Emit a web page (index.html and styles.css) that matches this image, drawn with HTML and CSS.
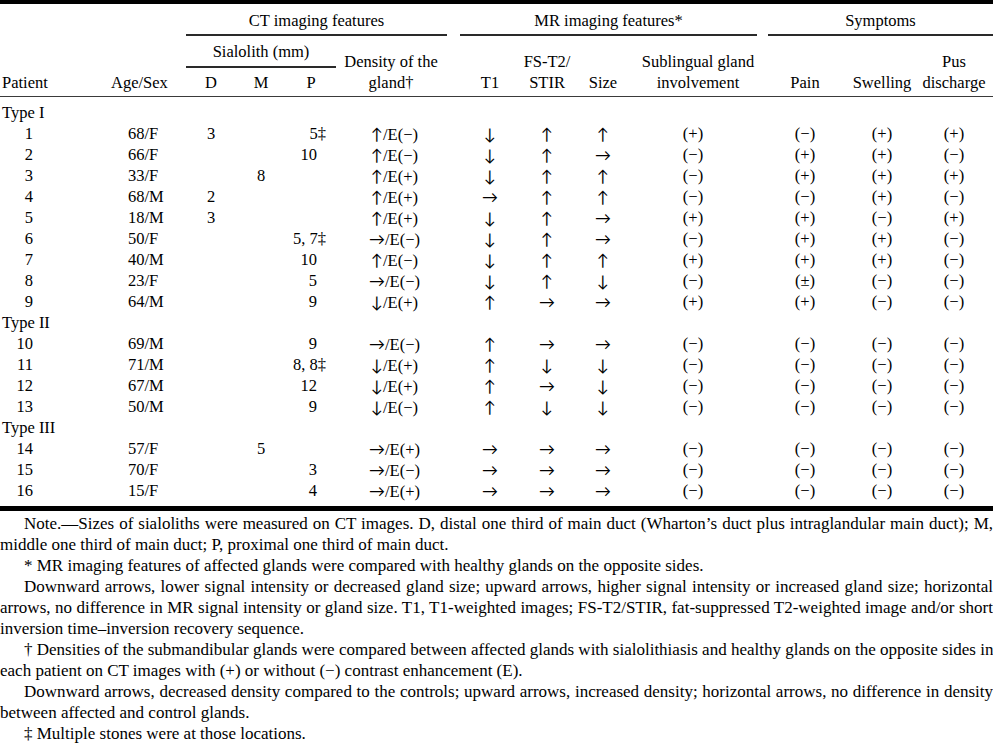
FILE: index.html
```html
<!DOCTYPE html>
<html lang="en">
<head>
<meta charset="utf-8">
<title>Table</title>
<link rel="stylesheet" href="styles.css">
</head>
<body>
<div class="tbl">
  <div class="head">
    <div class="grp g-ct">CT imaging features</div>
    <div class="grp g-mr">MR imaging features*</div>
    <div class="grp g-sy">Symptoms</div>
    <div class="sub-grp">Sialolith (mm)</div>
    <div class="h c1">Patient</div>
    <div class="h c2">Age/Sex</div>
    <div class="h c3">D</div>
    <div class="h c4">M</div>
    <div class="h c5">P</div>
    <div class="h2 c6">Density of the<br>gland†</div>
    <div class="h c7">T1</div>
    <div class="h2 c8">FS-T2/<br>STIR</div>
    <div class="h c9">Size</div>
    <div class="h2 c10">Sublingual gland<br>involvement</div>
    <div class="h c11">Pain</div>
    <div class="h c12">Swelling</div>
    <div class="h2 c13">Pus<br>discharge</div>
  </div>
  <div class="body">
    <div class="row"><div class="type">Type I</div></div>
    <div class="row"><div class="pt">1</div><div class="age">68/F</div><div>3</div><div></div><div class="p">5<span class="dag">‡</span></div><div><span class="ar">↑</span>/E(−)</div><div class="ar">↓</div><div class="ar">↑</div><div class="ar">↑</div><div class="sub">(+)</div><div>(−)</div><div>(+)</div><div>(+)</div></div>
    <div class="row"><div class="pt">2</div><div class="age">66/F</div><div></div><div></div><div class="p">10</div><div><span class="ar">↑</span>/E(−)</div><div class="ar">↓</div><div class="ar">↑</div><div class="ar">→</div><div class="sub">(−)</div><div>(+)</div><div>(+)</div><div>(−)</div></div>
    <div class="row"><div class="pt">3</div><div class="age">33/F</div><div></div><div>8</div><div class="p"></div><div><span class="ar">↑</span>/E(+)</div><div class="ar">↓</div><div class="ar">↑</div><div class="ar">↑</div><div class="sub">(−)</div><div>(+)</div><div>(+)</div><div>(+)</div></div>
    <div class="row"><div class="pt">4</div><div class="age">68/M</div><div>2</div><div></div><div class="p"></div><div><span class="ar">↑</span>/E(+)</div><div class="ar">→</div><div class="ar">↑</div><div class="ar">↑</div><div class="sub">(−)</div><div>(−)</div><div>(+)</div><div>(−)</div></div>
    <div class="row"><div class="pt">5</div><div class="age">18/M</div><div>3</div><div></div><div class="p"></div><div><span class="ar">↑</span>/E(+)</div><div class="ar">↓</div><div class="ar">↑</div><div class="ar">→</div><div class="sub">(+)</div><div>(+)</div><div>(−)</div><div>(+)</div></div>
    <div class="row"><div class="pt">6</div><div class="age">50/F</div><div></div><div></div><div class="p">5, 7<span class="dag">‡</span></div><div><span class="ar">→</span>/E(−)</div><div class="ar">↓</div><div class="ar">↑</div><div class="ar">→</div><div class="sub">(−)</div><div>(+)</div><div>(+)</div><div>(−)</div></div>
    <div class="row"><div class="pt">7</div><div class="age">40/M</div><div></div><div></div><div class="p">10</div><div><span class="ar">↑</span>/E(−)</div><div class="ar">↓</div><div class="ar">↑</div><div class="ar">↑</div><div class="sub">(+)</div><div>(+)</div><div>(+)</div><div>(−)</div></div>
    <div class="row"><div class="pt">8</div><div class="age">23/F</div><div></div><div></div><div class="p">5</div><div><span class="ar">→</span>/E(−)</div><div class="ar">↓</div><div class="ar">↑</div><div class="ar">↓</div><div class="sub">(−)</div><div>(±)</div><div>(−)</div><div>(−)</div></div>
    <div class="row"><div class="pt">9</div><div class="age">64/M</div><div></div><div></div><div class="p">9</div><div><span class="ar">↓</span>/E(+)</div><div class="ar">↑</div><div class="ar">→</div><div class="ar">→</div><div class="sub">(+)</div><div>(+)</div><div>(−)</div><div>(−)</div></div>
    <div class="row"><div class="type">Type II</div></div>
    <div class="row"><div class="pt">10</div><div class="age">69/M</div><div></div><div></div><div class="p">9</div><div><span class="ar">→</span>/E(−)</div><div class="ar">↑</div><div class="ar">→</div><div class="ar">→</div><div class="sub">(−)</div><div>(−)</div><div>(−)</div><div>(−)</div></div>
    <div class="row"><div class="pt">11</div><div class="age">71/M</div><div></div><div></div><div class="p">8, 8<span class="dag">‡</span></div><div><span class="ar">↓</span>/E(+)</div><div class="ar">↑</div><div class="ar">↓</div><div class="ar">↓</div><div class="sub">(−)</div><div>(−)</div><div>(−)</div><div>(−)</div></div>
    <div class="row"><div class="pt">12</div><div class="age">67/M</div><div></div><div></div><div class="p">12</div><div><span class="ar">↓</span>/E(+)</div><div class="ar">↑</div><div class="ar">→</div><div class="ar">↓</div><div class="sub">(−)</div><div>(−)</div><div>(−)</div><div>(−)</div></div>
    <div class="row"><div class="pt">13</div><div class="age">50/M</div><div></div><div></div><div class="p">9</div><div><span class="ar">↓</span>/E(−)</div><div class="ar">↑</div><div class="ar">↓</div><div class="ar">↓</div><div class="sub">(−)</div><div>(−)</div><div>(−)</div><div>(−)</div></div>
    <div class="row"><div class="type">Type III</div></div>
    <div class="row"><div class="pt">14</div><div class="age">57/F</div><div></div><div>5</div><div class="p"></div><div><span class="ar">→</span>/E(+)</div><div class="ar">→</div><div class="ar">→</div><div class="ar">→</div><div class="sub">(−)</div><div>(−)</div><div>(−)</div><div>(−)</div></div>
    <div class="row"><div class="pt">15</div><div class="age">70/F</div><div></div><div></div><div class="p">3</div><div><span class="ar">→</span>/E(−)</div><div class="ar">→</div><div class="ar">→</div><div class="ar">→</div><div class="sub">(−)</div><div>(−)</div><div>(−)</div><div>(−)</div></div>
    <div class="row"><div class="pt">16</div><div class="age">15/F</div><div></div><div></div><div class="p">4</div><div><span class="ar">→</span>/E(+)</div><div class="ar">→</div><div class="ar">→</div><div class="ar">→</div><div class="sub">(−)</div><div>(−)</div><div>(−)</div><div>(−)</div></div>
  </div>
</div>
<div class="notes">
  <div class="para">
    <div class="ln ind j">Note.—Sizes of sialoliths were measured on CT images. D, distal one third of main duct (Wharton’s duct plus intraglandular main duct); M,</div>
    <div class="ln">middle one third of main duct; P, proximal one third of main duct.</div>
  </div>
  <div class="para">
    <div class="ln ind">* MR imaging features of affected glands were compared with healthy glands on the opposite sides.</div>
  </div>
  <div class="para">
    <div class="ln ind j">Downward arrows, lower signal intensity or decreased gland size; upward arrows, higher signal intensity or increased gland size; horizontal</div>
    <div class="ln j">arrows, no difference in MR signal intensity or gland size. T1, T1-weighted images; FS-T2/STIR, fat-suppressed T2-weighted image and/or short</div>
    <div class="ln">inversion time–inversion recovery sequence.</div>
  </div>
  <div class="para">
    <div class="ln ind j">† Densities of the submandibular glands were compared between affected glands with sialolithiasis and healthy glands on the opposite sides in</div>
    <div class="ln">each patient on CT images with (+) or without (−) contrast enhancement (E).</div>
  </div>
  <div class="para">
    <div class="ln ind j">Downward arrows, decreased density compared to the controls; upward arrows, increased density; horizontal arrows, no difference in density</div>
    <div class="ln">between affected and control glands.</div>
  </div>
  <div class="para">
    <div class="ln ind">‡ Multiple stones were at those locations.</div>
  </div>
</div>
</body>
</html>
```

FILE: styles.css
```css
:root {
  --cols: 100px 86px 50px 50px 50px 117px 74px 40px 72px 118px 96px 58px 82px;
}

html, body {
  margin: 0;
  padding: 0;
  background: #fff;
}

body {
  width: 993px;
  color: #000;
  font-family: "Liberation Serif", "Times New Roman", serif;
  font-size: 16.5px;
  line-height: 21px;
}

.tbl {
  border-top: 4px solid #000;
  border-bottom: 5px solid #000;
}

/* ---------- header ---------- */
.head {
  display: grid;
  grid-template-columns: var(--cols);
  grid-template-rows: auto auto auto;
  padding-bottom: 3px;
  border-bottom: 1px solid #3a3a3a;
}

.grp {
  grid-row: 1;
  text-align: center;
  padding-top: 6px;
  padding-bottom: 3px;
  border-bottom: 2px solid #2a2a2a;
}

.g-ct { grid-column: 3 / 7; margin-right: 6px; }
.g-mr { grid-column: 7 / 11; margin-left: 7px; }
.g-sy { grid-column: 11 / 14; margin-left: 11px; }

.sub-grp {
  grid-row: 2;
  grid-column: 3 / 6;
  text-align: center;
  margin-top: 5px;
  padding-bottom: 4px;
  border-bottom: 2px solid #2a2a2a;
}

.h {
  grid-row: 3;
  padding-top: 4px;
  justify-self: center;
  white-space: nowrap;
}

.h2 {
  grid-row: 2 / 4;
  align-self: end;
  justify-self: center;
  text-align: center;
  white-space: nowrap;
}

.h.c1 { grid-column: 1; justify-self: start; padding-left: 2px; }
.h.c2 { grid-column: 2; justify-self: start; padding-left: 11px; }
.c3 { grid-column: 3; }
.c4 { grid-column: 4; }
.c5 { grid-column: 5; }
.c6 { grid-column: 6; margin-right: 7px; }
.c7 { grid-column: 7; }
.c8 { grid-column: 8; }
.c9 { grid-column: 9; }
.c10 { grid-column: 10; }
.c11 { grid-column: 11; }
.c12 { grid-column: 12; }
.c13 { grid-column: 13; margin-left: 4px; }

/* ---------- body ---------- */
.body {
  padding-top: 5px;
  padding-bottom: 5px;
}

.row {
  display: grid;
  grid-template-columns: var(--cols);
  height: 21px;
}

.row > div {
  justify-self: center;
  white-space: nowrap;
}

.row > .type {
  grid-column: 1 / -1;
  justify-self: start;
  padding-left: 2px;
}

.row > .pt {
  justify-self: start;
  width: 33px;
  text-align: right;
}

.row > .age {
  justify-self: start;
  padding-left: 28px;
}

.row > .p {
  justify-self: end;
  padding-right: 19px;
}

.dag {
  margin-right: -9px;
}

.row > .sub {
  padding-right: 10px;
}

.row > div:nth-child(13) {
  padding-left: 4px;
}

.ar {
  font-family: "Lato", "DejaVu Sans", sans-serif;
  font-size: 16px;
}

/* ---------- notes ---------- */
.notes {
  padding-top: 2px;
  font-size: 17px;
  line-height: 21px;
}

.ln {
  white-space: nowrap;
  text-align: left;
}

.ln.ind {
  padding-left: 24px;
}

.ln.j {
  text-align: justify;
  text-align-last: justify;
}
```
